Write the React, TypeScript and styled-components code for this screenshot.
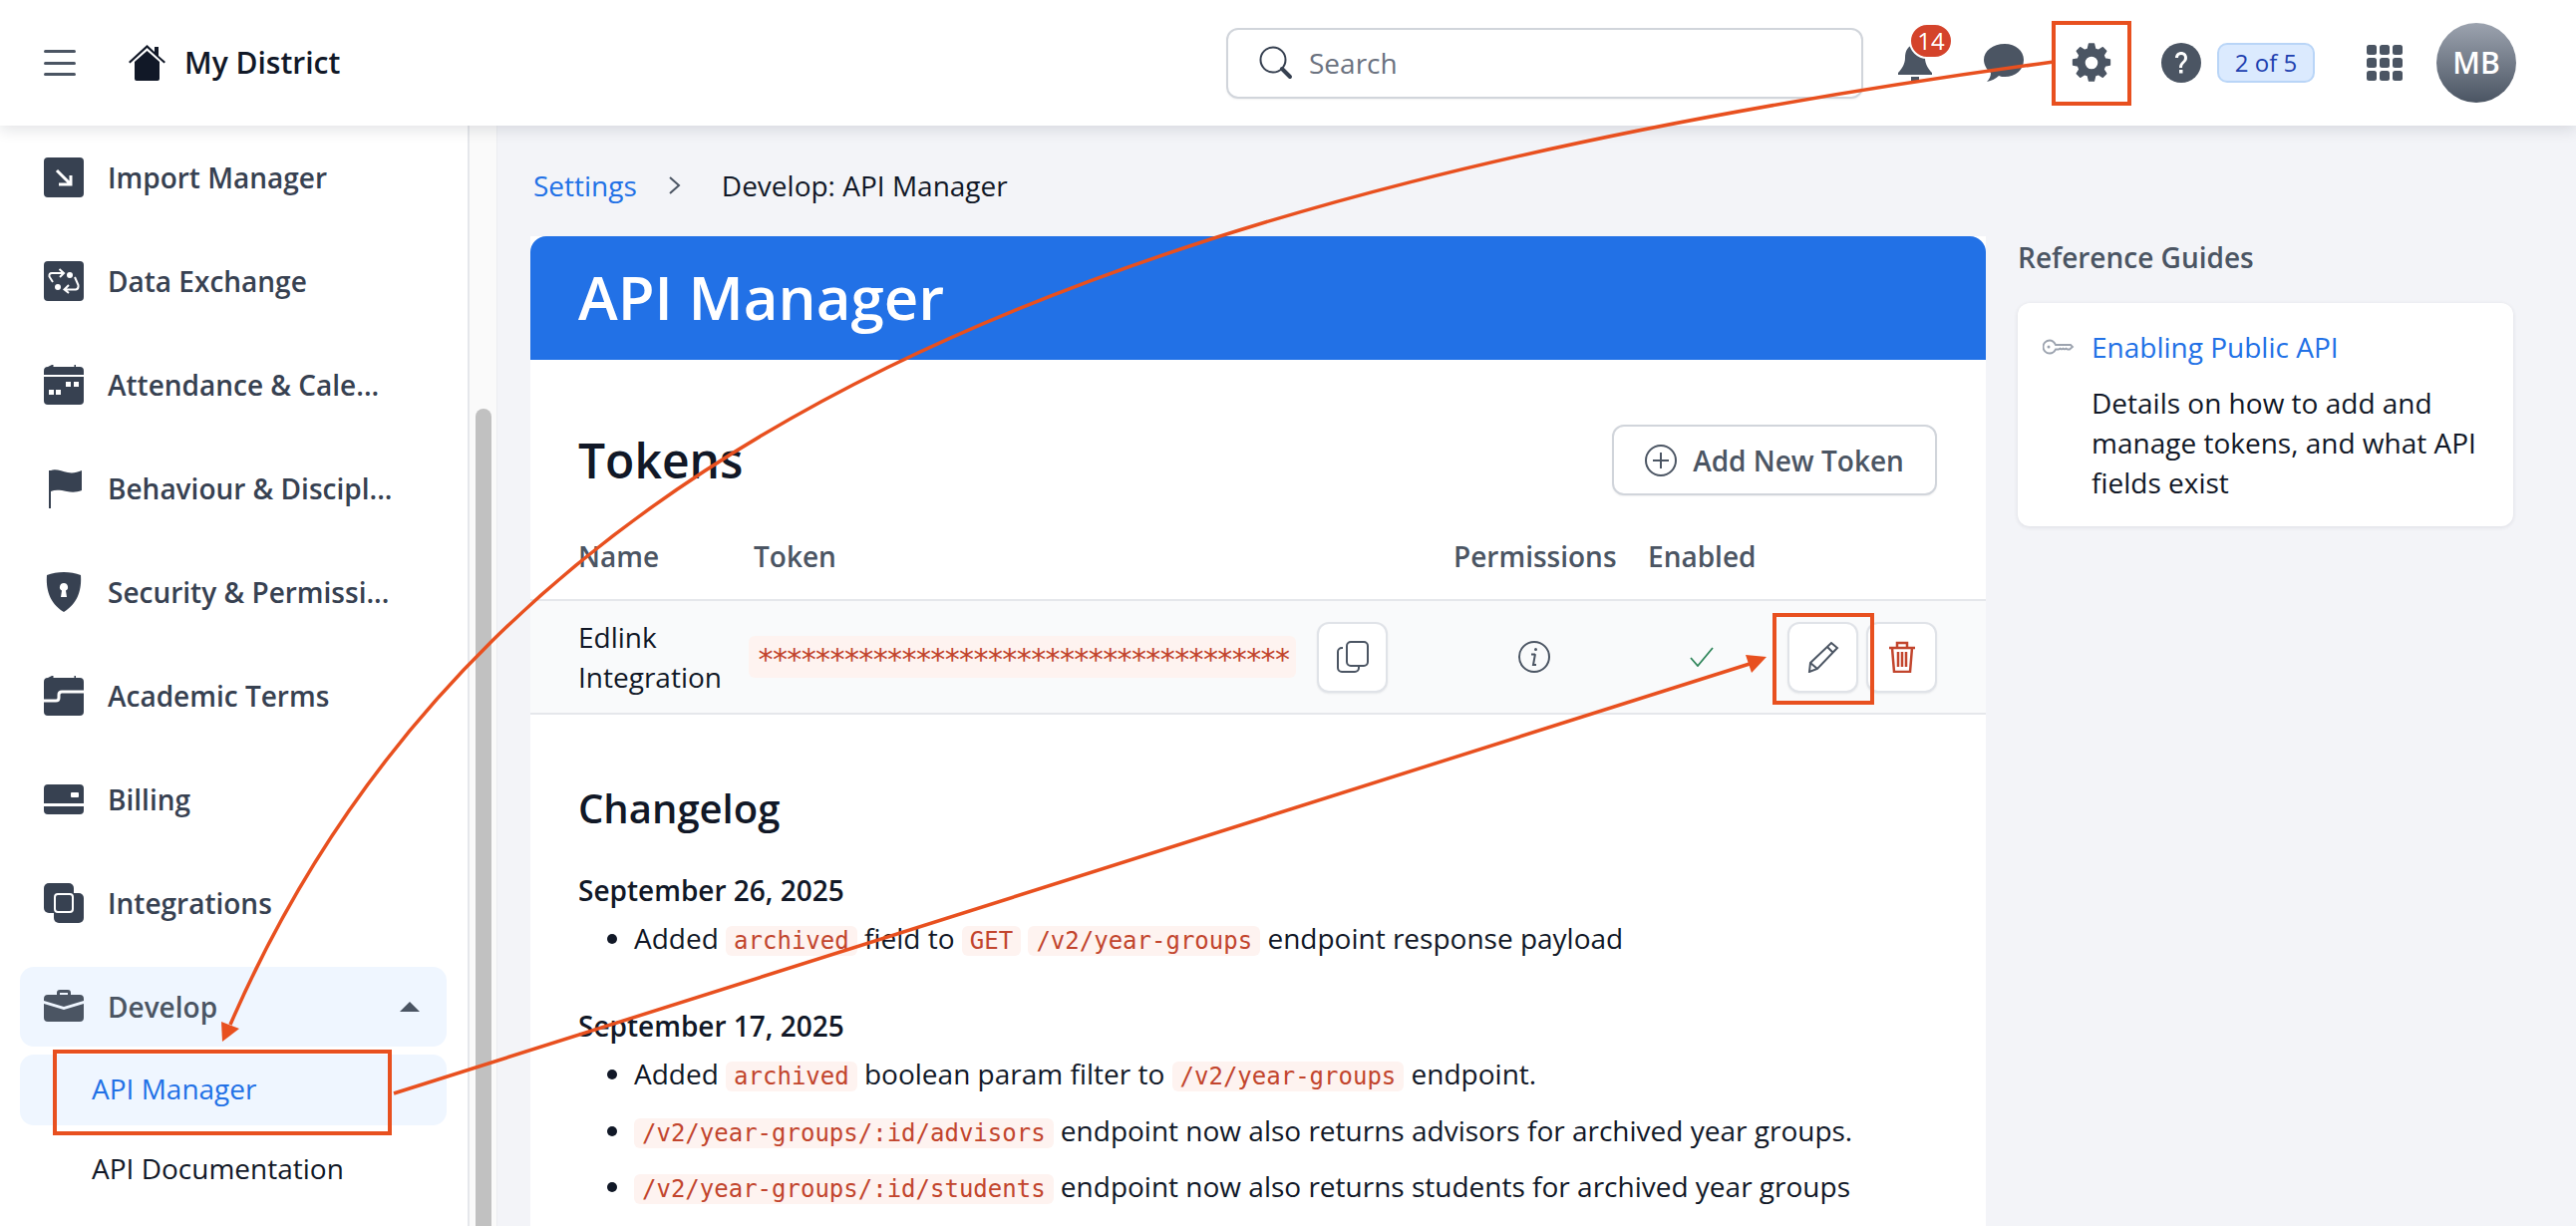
import React from "react";
import styled, { createGlobalStyle } from "styled-components";

const ink = "#111827";
const slate = "#374151";
const grey = "#4b5563";
const blue = "#2271e6";
const rust = "#c2452d";
const annotation = "#e8501f";

const GlobalStyle = createGlobalStyle`
  html, body {
    margin: 0;
    height: 100%;
    overflow: hidden;
  }
  body {
    font-family: "Open Sans", "Noto Sans", sans-serif;
    font-size: 28px;
    line-height: 40px;
    color: ${ink};
    background: #f3f4f8;
  }
  * {
    box-sizing: border-box;
  }
`;

const Page = styled.div`
  position: relative;
  width: 2584px;
  height: 1230px;
  display: flex;
  flex-direction: column;
  overflow: hidden;
`;

const Header = styled.header`
  position: relative;
  z-index: 2;
  flex: none;
  height: 126px;
  padding-left: 44px;
  padding-right: 60px;
  display: flex;
  align-items: center;
  background: #fff;
  box-shadow: 0 4px 14px rgba(17, 24, 39, 0.12);
`;

const Hamburger = styled.div`
  width: 32px;
  height: 26px;
  margin-right: 53px;
  display: flex;
  flex-direction: column;
  justify-content: space-between;

  span {
    height: 3px;
    border-radius: 2px;
    background: ${grey};
  }
`;

const Brand = styled.div`
  display: flex;
  align-items: center;
  gap: 19px;
  font-size: 30px;
  font-weight: 600;
`;

const SearchBox = styled.div`
  width: 639px;
  height: 71px;
  margin-left: auto;
  padding-left: 31px;
  display: flex;
  align-items: center;
  gap: 16px;
  border: 2px solid #d1d5db;
  border-radius: 12px;
  box-shadow: 0 1px 2px rgba(17, 24, 39, 0.06);
  color: #6b7280;
`;

const HeaderIcons = styled.div`
  margin-left: 35px;
  display: flex;
  align-items: center;
`;

const BellWrap = styled.div`
  position: relative;
  width: 34px;
  height: 40px;
  margin-right: 52px;
`;

const CountBadge = styled.span`
  position: absolute;
  top: -20px;
  left: 11px;
  width: 44px;
  height: 36px;
  border-radius: 18px;
  border: 2px solid #fff;
  background: #d4432b;
  color: #fff;
  font-size: 24px;
  line-height: 32px;
  text-align: center;
`;

const GearIcon = styled.svg`
  margin: 0 50px 0 48px;
`;

const StepsBadge = styled.span`
  width: 98px;
  height: 40px;
  margin-left: 16px;
  margin-right: 52px;
  border: 2px solid #b9d5f7;
  border-radius: 10px;
  background: #dbeafe;
  color: #1e40af;
  font-size: 24px;
  line-height: 35px;
  text-align: center;
`;

const Avatar = styled.div`
  width: 80px;
  height: 80px;
  margin-left: 34px;
  border-radius: 50%;
  background: linear-gradient(180deg, #9ca3af, #4b5563);
  color: #fff;
  font-size: 30px;
  font-weight: 600;
  line-height: 80px;
  text-align: center;
`;

const Body = styled.div`
  flex: 1;
  min-height: 0;
  display: flex;
`;

const Sidebar = styled.nav`
  flex: none;
  width: 471px;
  padding: 12px 21px 0 20px;
  display: flex;
  flex-direction: column;
  background: #fff;
  border-right: 2px solid #e5e7eb;
`;

const NavList = styled.div`
  display: flex;
  flex-direction: column;
  gap: 24px;
`;

const NavItem = styled.div<{ $open?: boolean }>`
  height: 80px;
  padding: 0 24px;
  display: flex;
  align-items: center;
  gap: 24px;
  border-radius: 14px;
  font-weight: 600;
  color: ${(p) => (p.$open ? grey : slate)};
  background: ${(p) => (p.$open ? "#eff6ff" : "transparent")};
`;

const NavIcon = styled.svg`
  flex: none;
  width: 40px;
  height: 40px;
  fill: currentColor;
`;

const Caret = styled.span`
  margin-left: auto;
  margin-right: 3px;
  border-left: 10px solid transparent;
  border-right: 10px solid transparent;
  border-bottom: 10px solid ${grey};
`;

const SubList = styled.div`
  margin-top: 8px;
  display: flex;
  flex-direction: column;
  gap: 9px;
`;

const SubItem = styled.div<{ $active?: boolean }>`
  height: 71px;
  padding: 0 0 3px 72px;
  display: flex;
  align-items: center;
  border-radius: 14px;
  color: ${(p) => (p.$active ? blue : ink)};
  background: ${(p) => (p.$active ? "#eff6ff" : "transparent")};
`;

const ScrollTrack = styled.div`
  flex: none;
  width: 28px;
  padding: 284px 5px 0 6px;
  display: flex;
  background: #fafafa;
  border-right: 1px solid #eceef1;
`;

const ScrollThumb = styled.div`
  flex: 1;
  border-radius: 8px 8px 0 0;
  background: #c1c1c1;
`;

const Main = styled.main`
  flex: 1;
  min-width: 0;
  padding-left: 33px;
  display: flex;
  flex-direction: column;
`;

const Breadcrumbs = styled.div`
  height: 111px;
  padding: 40px 0 0 3px;
  display: flex;
  align-items: flex-start;
  gap: 26px;
`;

const Crumb = styled.a`
  color: ${blue};
`;

const CrumbChevron = styled.svg`
  margin-left: 4px;
`;

const CrumbCurrent = styled.span`
  margin-left: 13px;
`;

const Columns = styled.div`
  flex: 1;
  display: flex;
  gap: 32px;
`;

const Card = styled.section`
  width: 1460px;
  background: #fff;
`;

const Banner = styled.h1`
  height: 124px;
  margin: 0;
  padding-left: 48px;
  border-radius: 16px 16px 0 0;
  background: ${blue};
  color: #fff;
  font-size: 60px;
  font-weight: 600;
  line-height: 122px;
`;

const TitleRow = styled.div`
  margin-top: 65px;
  padding: 0 49px 0 48px;
  display: flex;
  align-items: center;
  justify-content: space-between;
`;

const SectionTitle = styled.h2`
  margin: 0;
  font-size: 48px;
  font-weight: 600;
  line-height: 70px;
`;

const OutlineButton = styled.button`
  height: 71px;
  width: 326px;
  display: flex;
  align-items: center;
  justify-content: center;
  gap: 16px;
  border: 2px solid #d1d5db;
  border-radius: 12px;
  background: #fff;
  box-shadow: 0 1px 2px rgba(17, 24, 39, 0.06);
  color: ${grey};
  font: 600 28px/40px "Open Sans", sans-serif;
`;

const TableGrid = styled.div`
  padding: 0 49px 0 48px;
  display: grid;
  grid-template-columns: 143px 669px 162px 107px 150px;
  column-gap: 33px;
`;

const TableHead = styled(TableGrid)`
  margin-top: 41px;
  padding-bottom: 23px;
  color: ${grey};
  font-weight: 600;
`;

const TableRow = styled(TableGrid)`
  height: 116px;
  align-items: center;
  background: #f9fafb;
  border-top: 2px solid #e5e7eb;
  border-bottom: 2px solid #e5e7eb;
`;

const TokenCell = styled.div`
  margin-left: -5px;
  display: flex;
  align-items: center;
  gap: 21px;
`;

const Code = styled.code`
  padding: 1px 8px;
  border-radius: 6px;
  background: #fef3f0;
  color: ${rust};
  font-family: "DejaVu Sans Mono", monospace;
  font-size: 24px;
  line-height: 34px;
`;

// same 14.4px pitch as the 24px code, but larger glyphs sitting on the pill's middle
const TokenCode = styled(Code)`
  display: block;
  height: 42px;
  width: 549px;
  padding: 0 8px;
  font-size: 30px;
  letter-spacing: -3.66px;
  line-height: 48px;
  white-space: nowrap;
  overflow: hidden;
`;

const IconButton = styled.button<{ $danger?: boolean }>`
  flex: none;
  width: 71px;
  height: 71px;
  padding: 0;
  display: flex;
  align-items: center;
  justify-content: center;
  border: 2px solid #e0e3e8;
  border-radius: 12px;
  background: #fff;
  box-shadow: 0 1px 2px rgba(17, 24, 39, 0.08);
  color: ${(p) => (p.$danger ? rust : grey)};
`;

const CenterCell = styled.div`
  display: flex;
  justify-content: center;
`;

const ActionCell = styled.div`
  display: flex;
  gap: 8px;
`;

const Changelog = styled.div`
  margin-top: 66px;
  padding-left: 48px;
`;

const ChangelogTitle = styled.h2`
  margin: 0;
  font-size: 40px;
  font-weight: 600;
  line-height: 56px;
`;

const DateHeading = styled.h3<{ $first?: boolean }>`
  margin: ${(p) => (p.$first ? "34px" : "48px")} 0 8px;
  font-size: 28px;
  font-weight: 600;
  line-height: 40px;
`;

const ChangeList = styled.ul`
  margin: 0;
  padding-left: 56px;
  white-space: nowrap;

  li + li {
    margin-top: 16.5px;
  }
`;

const Aside = styled.aside`
  width: 497px;
`;

const AsideTitle = styled.div`
  height: 67px;
  padding-top: 1px;
  color: ${grey};
  font-weight: 600;
`;

const GuideCard = styled.div`
  height: 224px;
  padding: 24px 24px 0 25px;
  display: grid;
  grid-template-columns: 32px 1fr;
  align-content: start;
  column-gap: 17px;
  border-radius: 12px;
  background: #fff;
  box-shadow: 0 1px 4px rgba(17, 24, 39, 0.1);
`;

const GuideLink = styled.a`
  color: ${blue};
  margin-bottom: 16px;
`;

const GuideText = styled.div`
  grid-column: 2;
`;

const KeyIcon = styled.svg`
  margin-top: 12px;
  width: 32px;
  height: 16px;
`;

const AnnotationLayer = styled.svg`
  position: absolute;
  inset: 0;
  z-index: 3;
  width: 2584px;
  height: 1230px;
  pointer-events: none;
`;

const iconPaths: Record<string, React.ReactNode> = {
  importManager: (
    <>
      <rect width="40" height="40" rx="4" />
      <path d="M13 13L27 27M15 27H27V18" fill="none" stroke="#fff" strokeWidth="3" />
    </>
  ),
  dataExchange: (
    <>
      <rect width="40" height="40" rx="4" />
      <path
        d="M9 21L5.500 15.500Q5 12 8 12H20M15.500 8L20 12L16 16M31 16L34.500 24Q35 28 32 28.500H20.500M25 24L20.500 28.500L25 32"
        fill="none"
        stroke="#fff"
        strokeWidth="2"
      />
      <circle cx="26" cy="14" r="3" fill="#fff" />
      <circle cx="14" cy="26" r="3" fill="#fff" />
    </>
  ),
  attendance: (
    <>
      <path d="M8 0h1.500v2h21V0H32v2h4a4 4 0 0 1 4 4v4H0V6a4 4 0 0 1 4-4z" />
      <path d="M0 12h40v24a4 4 0 0 1-4 4H4a4 4 0 0 1-4-4z" />
      <path d="M22 17h5v5h-5zM30 17h5v5h-5zM5 25h5v5H5zM12 25h5v5h-5z" fill="#fff" />
    </>
  ),
  behaviour: (
    <>
      <path d="M5 2h2v38H5z" />
      <path d="M7 2c5-2 11 1 17 2 5 1 9 0 14-2v20c-5 2-10 2-15 1-6-1-11-2-16 0z" />
    </>
  ),
  security: (
    <path
      fillRule="evenodd"
      d="M20 0c6 0 12 1 17 3 1 13-2 28-17 37C5 31 2 16 3 3c5-2 11-3 17-3zm0 11a4 4 0 0 0-2 7.500L17 25h6l-1-6.500A4 4 0 0 0 20 11z"
    />
  ),
  terms: (
    <>
      <path d="M8 0h1.500v2h21V0H32v2h4a4 4 0 0 1 4 4v30a4 4 0 0 1-4 4H4a4 4 0 0 1-4-4V6a4 4 0 0 1 4-4z" />
      <path d="M40 16H18c-2 0-3 1-3 3v3c0 2-1 3-3 3H0" fill="none" stroke="#fff" strokeWidth="3" />
    </>
  ),
  billing: (
    <>
      <path
        fillRule="evenodd"
        d="M4 5h32a4 4 0 0 1 4 4v15H0V9a4 4 0 0 1 4-4zm24 8a1 1 0 0 0-1 1v3a1 1 0 0 0 1 1h6a1 1 0 0 0 1-1v-3a1 1 0 0 0-1-1z"
      />
      <path d="M0 27h40v4a4 4 0 0 1-4 4H4a4 4 0 0 1-4-4z" />
    </>
  ),
  integrations: (
    <>
      <rect width="30" height="30" rx="5" />
      <rect x="10" y="10" width="30" height="30" rx="5" />
      <rect x="11" y="11" width="18" height="18" rx="3" fill="none" stroke="#fff" strokeWidth="2" />
    </>
  ),
  develop: (
    <>
      <path
        fillRule="evenodd"
        d="M13 8V6a3 3 0 0 1 3-3h8a3 3 0 0 1 3 3v2h9a4 4 0 0 1 4 4v2L20 20 0 14v-2a4 4 0 0 1 4-4zm3 0h8V6h-8z"
      />
      <path d="M0 17l20 6 20-6v14a4 4 0 0 1-4 4H4a4 4 0 0 1-4-4z" />
    </>
  ),
};

const navItems = [
  { id: "importManager", label: "Import Manager" },
  { id: "dataExchange", label: "Data Exchange" },
  { id: "attendance", label: "Attendance & Cale..." },
  { id: "behaviour", label: "Behaviour & Discipl..." },
  { id: "security", label: "Security & Permissi..." },
  { id: "terms", label: "Academic Terms" },
  { id: "billing", label: "Billing" },
  { id: "integrations", label: "Integrations" },
];

const Annotations: React.FC = () => (
  <AnnotationLayer viewBox="0 0 2584 1230">
    <g fill="none" stroke={annotation} strokeWidth="4">
      <rect x="2060" y="23" width="76" height="81" />
      <rect x="1780" y="617" width="98" height="88" />
      <rect x="55" y="1055" width="336" height="82" />
    </g>
    <g fill="none" stroke={annotation} strokeWidth="3.500">
      <path d="M2060 62C1120 190 490 430 231 1028" />
      <path d="M395 1097L1755 666" />
    </g>
    <g fill={annotation}>
      <path d="M223 1045L222 1025L240 1032z" />
      <path d="M1772 659L1751 657L1757 675z" />
    </g>
  </AnnotationLayer>
);

export default function App() {
  return (
    <Page>
      <GlobalStyle />
      <Header>
        <Hamburger>
          <span />
          <span />
          <span />
        </Hamburger>
        <Brand>
          <svg width="37" height="36" viewBox="0 0 37 36" fill={ink}>
            <path d="M6 17L18.500 6 31 17v17a2 2 0 0 1-2 2H8a2 2 0 0 1-2-2z" />
            <path d="M0 17L18.500 0 26 7V2h4v9l7 6-1.500 1.500L18.500 3 1.500 18.500z" />
          </svg>
          My District
        </Brand>
        <SearchBox>
          <svg width="34" height="34" viewBox="0 0 34 34" fill="none" stroke={slate}>
            <circle cx="14" cy="14" r="12.500" strokeWidth="2" />
            <path d="M23 23l8 8" strokeWidth="4" strokeLinecap="round" />
          </svg>
          Search
        </SearchBox>
        <HeaderIcons>
          <BellWrap>
            <svg width="34" height="40" viewBox="0 0 34 40" fill={grey}>
              <path d="M17 2c7 0 10 6 10 13 0 6 3 11 7 15v2H0v-2c4-4 7-9 7-15C7 8 10 2 17 2z" />
              <rect x="13" y="34" width="8" height="4" />
            </svg>
            <CountBadge>14</CountBadge>
          </BellWrap>
          <svg width="40" height="38" viewBox="0 0 40 38" fill={grey}>
            <path d="M21 0c11 0 19 7 19 16 0 10-8 17-19 17-2 0-4 0-6-1-3 3-7 5-12 6 3-3 4-6 4-9-4-3-7-8-7-13C0 7 9 0 21 0z" />
          </svg>
          <GearIcon width="40" height="40" viewBox="0 0 24 24" fill={grey} stroke={grey} strokeWidth="0.8" strokeLinejoin="round">
            <path
              fillRule="evenodd"
              d="M10.500 .6h3l.7 3 2 .8 2.600-1.600 2.100 2.100-1.600 2.600.8 2 3 .7v3l-3 .7-.8 2 1.600 2.600-2.100 2.100-2.600-1.600-2 .8-.7 3h-3l-.7-3-2-.8-2.600 1.600-2.100-2.100 1.600-2.600-.8-2-3-.7v-3l3-.7.8-2-1.600-2.600 2.100-2.100 2.600 1.600 2-.8zM12 7.800a4.200 4.200 0 1 0 0 8.400 4.200 4.200 0 0 0 0-8.400z"
            />
          </GearIcon>
          <svg width="40" height="40" viewBox="0 0 40 40">
            <circle cx="20" cy="20" r="20" fill={grey} />
            <path d="M14 15c0-4 3-6 6-6s6 2 6 6c0 5-5 5-5 10h-3c0-6 5-6 5-10 0-2-1-3-3-3s-3 1-3 3z" fill="#fff" />
            <rect x="18" y="27" width="3.500" height="3.500" fill="#fff" />
          </svg>
          <StepsBadge>2 of 5</StepsBadge>
          <svg width="36" height="36" viewBox="0 0 36 36" fill={grey}>
            {[0, 13, 26].map((y) =>
              [0, 13, 26].map((x) => <rect key={`${x}-${y}`} x={x} y={y} width="10" height="10" rx="2.500" />),
            )}
          </svg>
          <Avatar>MB</Avatar>
        </HeaderIcons>
      </Header>
      <Body>
        <Sidebar>
          <NavList>
            {navItems.map((item) => (
              <NavItem key={item.id}>
                <NavIcon viewBox="0 0 40 40">{iconPaths[item.id]}</NavIcon>
                {item.label}
              </NavItem>
            ))}
            <NavItem $open>
              <NavIcon viewBox="0 0 40 40">{iconPaths.develop}</NavIcon>
              Develop
              <Caret />
            </NavItem>
          </NavList>
          <SubList>
            <SubItem $active>API Manager</SubItem>
            <SubItem>API Documentation</SubItem>
          </SubList>
        </Sidebar>
        <ScrollTrack>
          <ScrollThumb />
        </ScrollTrack>
        <Main>
          <Breadcrumbs>
            <Crumb>Settings</Crumb>
            <CrumbChevron width="16" height="40" viewBox="0 0 16 40" fill="none" stroke={grey} strokeWidth="2">
              <path d="M3 12l9 8-9 8" />
            </CrumbChevron>
            <CrumbCurrent>Develop: API Manager</CrumbCurrent>
          </Breadcrumbs>
          <Columns>
            <Card>
              <Banner>API Manager</Banner>
              <TitleRow>
                <SectionTitle>Tokens</SectionTitle>
                <OutlineButton>
                  <svg width="32" height="32" viewBox="0 0 32 32" fill="none" stroke={grey} strokeWidth="2">
                    <circle cx="16" cy="16" r="15" />
                    <path d="M16 8v16M8 16h16" />
                  </svg>
                  Add New Token
                </OutlineButton>
              </TitleRow>
              <TableHead>
                <div>Name</div>
                <div>Token</div>
                <div>Permissions</div>
                <div>Enabled</div>
              </TableHead>
              <TableRow>
                <div>
                  Edlink
                  <br />
                  Integration
                </div>
                <TokenCell>
                  <TokenCode>{"*".repeat(37)}</TokenCode>
                  <IconButton>
                    <svg width="32" height="32" viewBox="0 0 32 32" fill="none" stroke={grey} strokeWidth="2">
                      <rect x="10" y="1" width="21" height="24" rx="4" />
                      <path d="M6 7H5a4 4 0 0 0-4 4v16a4 4 0 0 0 4 4h13a4 4 0 0 0 4-4v-1" />
                    </svg>
                  </IconButton>
                </TokenCell>
                <CenterCell>
                  <svg width="32" height="32" viewBox="0 0 32 32" fill="none" stroke={grey} strokeWidth="2">
                    <circle cx="16" cy="16" r="15" />
                    <path d="M17 13l-2 11h3M13 13.500h4" />
                    <circle cx="17.500" cy="8.500" r="1.500" fill={grey} stroke="none" />
                  </svg>
                </CenterCell>
                <CenterCell>
                  <svg width="24" height="20" viewBox="0 0 24 20" fill="none" stroke="#2f855a" strokeWidth="1.800">
                    <path d="M1 11l7 8L23 1" />
                  </svg>
                </CenterCell>
                <ActionCell>
                  <IconButton>
                    <svg width="32" height="32" viewBox="0 0 32 32" fill="none" stroke={grey} strokeWidth="2">
                      <path d="M24 2l6 5L10 28l-8 3 1-9zM20 6l6 6M3 22l7 6" />
                    </svg>
                  </IconButton>
                  <IconButton $danger>
                    <svg width="28" height="32" viewBox="0 0 28 32" fill="none" stroke={rust} strokeWidth="2.500">
                      <path d="M1 7h26M9 6V2h10v4M4 7l2 24h16l2-24M10 11v15M14 11v15M18 11v15" />
                    </svg>
                  </IconButton>
                </ActionCell>
              </TableRow>
              <Changelog>
                <ChangelogTitle>Changelog</ChangelogTitle>
                <DateHeading $first>September 26, 2025</DateHeading>
                <ChangeList>
                  <li>
                    Added <Code>archived</Code> field to <Code>GET</Code> <Code>/v2/year-groups</Code> endpoint response
                    payload
                  </li>
                </ChangeList>
                <DateHeading>September 17, 2025</DateHeading>
                <ChangeList>
                  <li>
                    Added <Code>archived</Code> boolean param filter to <Code>/v2/year-groups</Code> endpoint.
                  </li>
                  <li>
                    <Code>/v2/year-groups/:id/advisors</Code> endpoint now also returns advisors for archived year
                    groups.
                  </li>
                  <li>
                    <Code>/v2/year-groups/:id/students</Code> endpoint now also returns students for archived year
                    groups
                  </li>
                </ChangeList>
              </Changelog>
            </Card>
            <Aside>
              <AsideTitle>Reference Guides</AsideTitle>
              <GuideCard>
                <KeyIcon viewBox="0 0 32 16" fill="none" stroke="#9ca3af" strokeWidth="1.800">
                  <path d="M7 1.500a6.500 6.500 0 1 0 0 13c3 0 5-2 6-4h3l1.500-1 1.500 1 1.500-1 1.500 1 1.500-1 1.500 1h2l3-2.500-2-2H13c-1-2-3-4.500-6-4.500z" />
                  <circle cx="6" cy="8" r="1.500" fill="#9ca3af" stroke="none" />
                </KeyIcon>
                <GuideLink>Enabling Public API</GuideLink>
                <GuideText>Details on how to add and manage tokens, and what API fields exist</GuideText>
              </GuideCard>
            </Aside>
          </Columns>
        </Main>
      </Body>
      <Annotations />
    </Page>
  );
}
